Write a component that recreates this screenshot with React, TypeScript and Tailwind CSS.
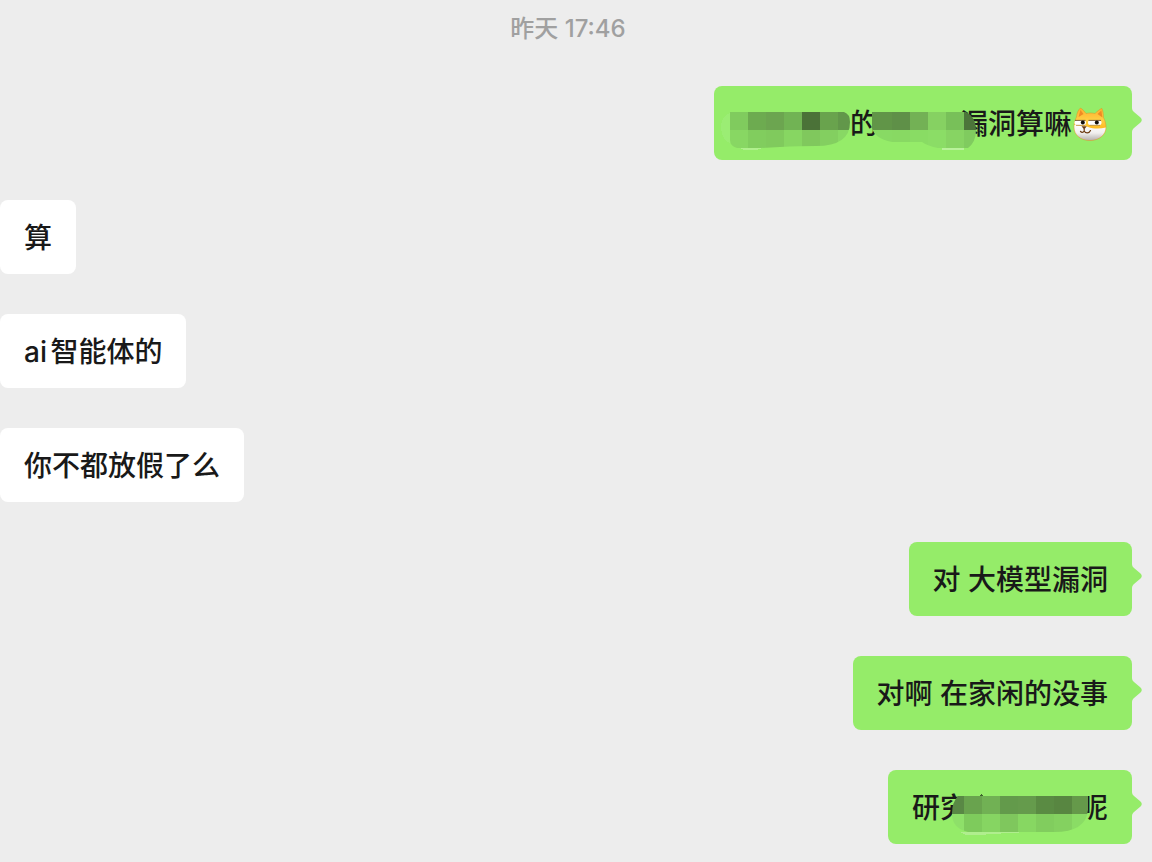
import type { ReactNode } from 'react';

interface IMosaic {
  id: string;
  shape: string;
  className: string;
  width: number;
  columns: number[];
  rows: string[][];
  children?: ReactNode;
}

interface IBubble {
  mine?: boolean;
  children: ReactNode;
}

// columns holds the left edge of every block, the last value is the right edge
function Mosaic({
  id,
  shape,
  className,
  width,
  columns,
  rows,
  children,
}: IMosaic) {
  return (
    <svg
      className={`absolute ${className}`}
      width={width}
      height="48"
      viewBox={`0 0 ${width} 48`}
      shapeRendering="crispEdges"
      aria-hidden="true"
    >
      <clipPath id={id}>
        <path d={shape} />
      </clipPath>
      {children}
      <g clipPath={`url(#${id})`}>
        {rows.map((row, y) =>
          row.map((color, x) => (
            <rect
              key={`${x}-${y}`}
              x={columns[x]}
              y={6 + y * 18}
              width={columns[x + 1] - columns[x]}
              height="18"
              fill={color}
            />
          ))
        )}
      </g>
    </svg>
  );
}

const headPath =
  'M2 21C2 16 3.500 13 4.500 11C4.800 7 6.500 3.500 8.500 2C10.500 3 12.500 5.500 14 7.500C17 6.800 20 6.800 23 7.500C25 5.500 27.500 3.500 29.800 2.300C31 5 31.500 8 31.500 11.500C33 14.500 34 17.500 34 21C34 29 27 34.500 18 34.500C8.500 34.500 2 29 2 21Z';

function DogeEmoji() {
  return (
    <svg
      className="h-9 w-9 shrink-0"
      viewBox="0 0 36 36"
      role="img"
      aria-label="doge"
    >
      <defs>
        <linearGradient id="fur" x1="0" y1="0" x2="0" y2="1">
          <stop offset="0" stopColor="#ffa928" />
          <stop offset="0.4" stopColor="#ffcf45" />
          <stop offset="0.65" stopColor="#ffb81c" />
        </linearGradient>
        <linearGradient id="muzzle" x1="0" y1="0" x2="0" y2="1">
          <stop offset="0" stopColor="#ffffff" />
          <stop offset="0.5" stopColor="#f1efee" />
          <stop offset="1" stopColor="#a9a3a0" />
        </linearGradient>
        <clipPath id="head">
          <path d={headPath} />
        </clipPath>
      </defs>
      <g clipPath="url(#head)">
        <rect width="36" height="36" fill="url(#fur)" />
        <path d="M8.500 4L11.500 8L6.500 11Z" fill="#ef8b25" />
        <path d="M29.300 4.500L25.500 8L30.500 11.500Z" fill="#ef8b25" />
        <path
          d="M0 18C3 19.500 7 20 10 19.800C13 19.500 14 20 16 21C22 23 29 23 36 21V36H0Z"
          fill="url(#muzzle)"
        />
      </g>
      <path
        d={headPath}
        fill="none"
        stroke="#d98a1e"
        strokeOpacity="0.5"
        strokeWidth="0.8"
      />
      <rect x="2.500" y="14" width="11.500" height="5.200" rx="2.600" fill="#fff" />
      <rect x="16" y="14" width="13.500" height="5.200" rx="2.600" fill="#fff" />
      <path
        d="M3 14.400H13.500M16.500 14.400H29"
        stroke="#6d4a20"
        strokeWidth="0.900"
        fill="none"
      />
      <path
        d="M4 19.300H13M17.500 19.300H28"
        stroke="#a8792e"
        strokeWidth="0.700"
        fill="none"
      />
      <circle cx="10.800" cy="16.600" r="2" fill="#120e0a" />
      <circle cx="24.800" cy="16.600" r="2" fill="#120e0a" />
      <path d="M9.500 20.300H14.800L12.200 23.500Z" fill="#6b3a12" />
      <path
        d="M12.200 23V25M8.500 25.300C9.500 26.800 11.200 26.800 12.200 25C13.500 27.500 17 27.800 18.500 24.500"
        stroke="#6b3a12"
        strokeWidth="1.200"
        strokeLinecap="round"
        fill="none"
      />
    </svg>
  );
}

function Bubble({ mine, children }: IBubble) {
  return (
    <li className={mine ? 'flex justify-end pr-5' : 'flex'}>
      <div
        className={`relative flex items-center whitespace-pre rounded-lg px-6 pb-[15px] pt-[17px] text-[28px] leading-[42px] font-medium text-[#191919] ${
          mine ? 'bg-[#95ec69]' : 'bg-white'
        }`}
      >
        {children}
        {mine && (
          <svg
            className="absolute left-full top-[22px] h-6 w-[10px]"
            viewBox="0 0 10 24"
            aria-hidden="true"
          >
            <path
              d="M0 0C0 2 1 3 2 4L8.500 9.500Q11 12 8.500 14.500L2 20C1 21 0 22 0 24Z"
              fill="#95ec69"
            />
          </svg>
        )}
      </div>
    </li>
  );
}

export default function App() {
  return (
    <main className="min-h-screen bg-[#ededed] pb-4 font-['Inter','Noto_Sans_CJK_SC',sans-serif]">
      <p className="pb-10 pr-4 pt-3 text-center text-2xl leading-[34px] font-medium text-[#a0a0a0]">
        昨天 17:46
      </p>
      <ul className="flex flex-col gap-10">
        <Bubble mine>
          <span className="w-28" />
          <span>的</span>
          <span className="w-[82px]" />
          <span>漏洞算嘛</span>
          <DogeEmoji />
          <Mosaic
            id="mosaic-name"
            className="left-1.5 top-5"
            width={132}
            shape="M10 6H124Q130 8 130 16Q130 40 96 40Q80 40 60 41L40 42H17Q10 40 10 34Z"
            columns={[10, 28, 46, 64, 82, 100, 118, 130]}
            rows={[
              ['#80cb5e', '#6dab50', '#6ca550', '#71b354', '#4b7238', '#69a34d', '#62974a'],
              ['#88d763', '#81cd5e', '#80ca5d', '#87d662', '#80c85d', '#83cf60', '#88d864'],
            ]}
          >
            <path d="M14 6Q1 8 1 21Q1 34 12 38Z" fill="#9bed74" />
            <path d="M20 42H42L36 44H24Z" fill="#b0f08d" />
          </Mosaic>
          <Mosaic
            id="mosaic-product"
            className="left-[152px] top-5"
            width={116}
            shape="M6 6H100Q110 11 110 24Q110 36 102 42H72Q62 40 56 36H26Q8 32 6 22Z"
            columns={[6, 26, 44, 62, 80, 98, 110]}
            rows={[
              ['#619548', '#5f9048', '#73b155', '#86d162', '#78c059', '#4c743a'],
              ['#88da64', '#88d963', '#89dc64', '#8bdd66', '#87d463', '#80cb5f'],
            ]}
          >
            <path d="M76 42H98V44H76Z" fill="#b9f29b" />
          </Mosaic>
        </Bubble>
        <Bubble>算</Bubble>
        <Bubble>
          <span className="[text-autospace:normal]">ai智能体的</span>
        </Bubble>
        <Bubble>你不都放假了么</Bubble>
        <Bubble mine>对 大模型漏洞</Bubble>
        <Bubble mine>对啊 在家闲的没事</Bubble>
        <Bubble mine>
          <span>研究</span>
          <span className="w-28" />
          <span>呢</span>
          <Mosaic
            id="mosaic-topic"
            className="left-[60px] top-5"
            width={146}
            shape="M10 6H140V20Q138 42 106 42H20Q4 38 4 24Q4 12 10 6Z"
            columns={[4, 16, 34, 52, 70, 88, 106, 124, 140]}
            rows={[
              ['#598845', '#69a34e', '#71b154', '#639a4b', '#659b4c', '#5a8b43', '#588641', '#65994a'],
              ['#8ee069', '#7ecb5c', '#86d562', '#7fc75d', '#87d762', '#81cd5e', '#84d160', '#8adc65'],
            ]}
          >
            <path d="M31 6L33 4L35 6Z" fill="#3f632f" />
            <path d="M12 42H82L60 43L30 45H18Z" fill="#b0ee8e" />
          </Mosaic>
        </Bubble>
      </ul>
    </main>
  );
}
